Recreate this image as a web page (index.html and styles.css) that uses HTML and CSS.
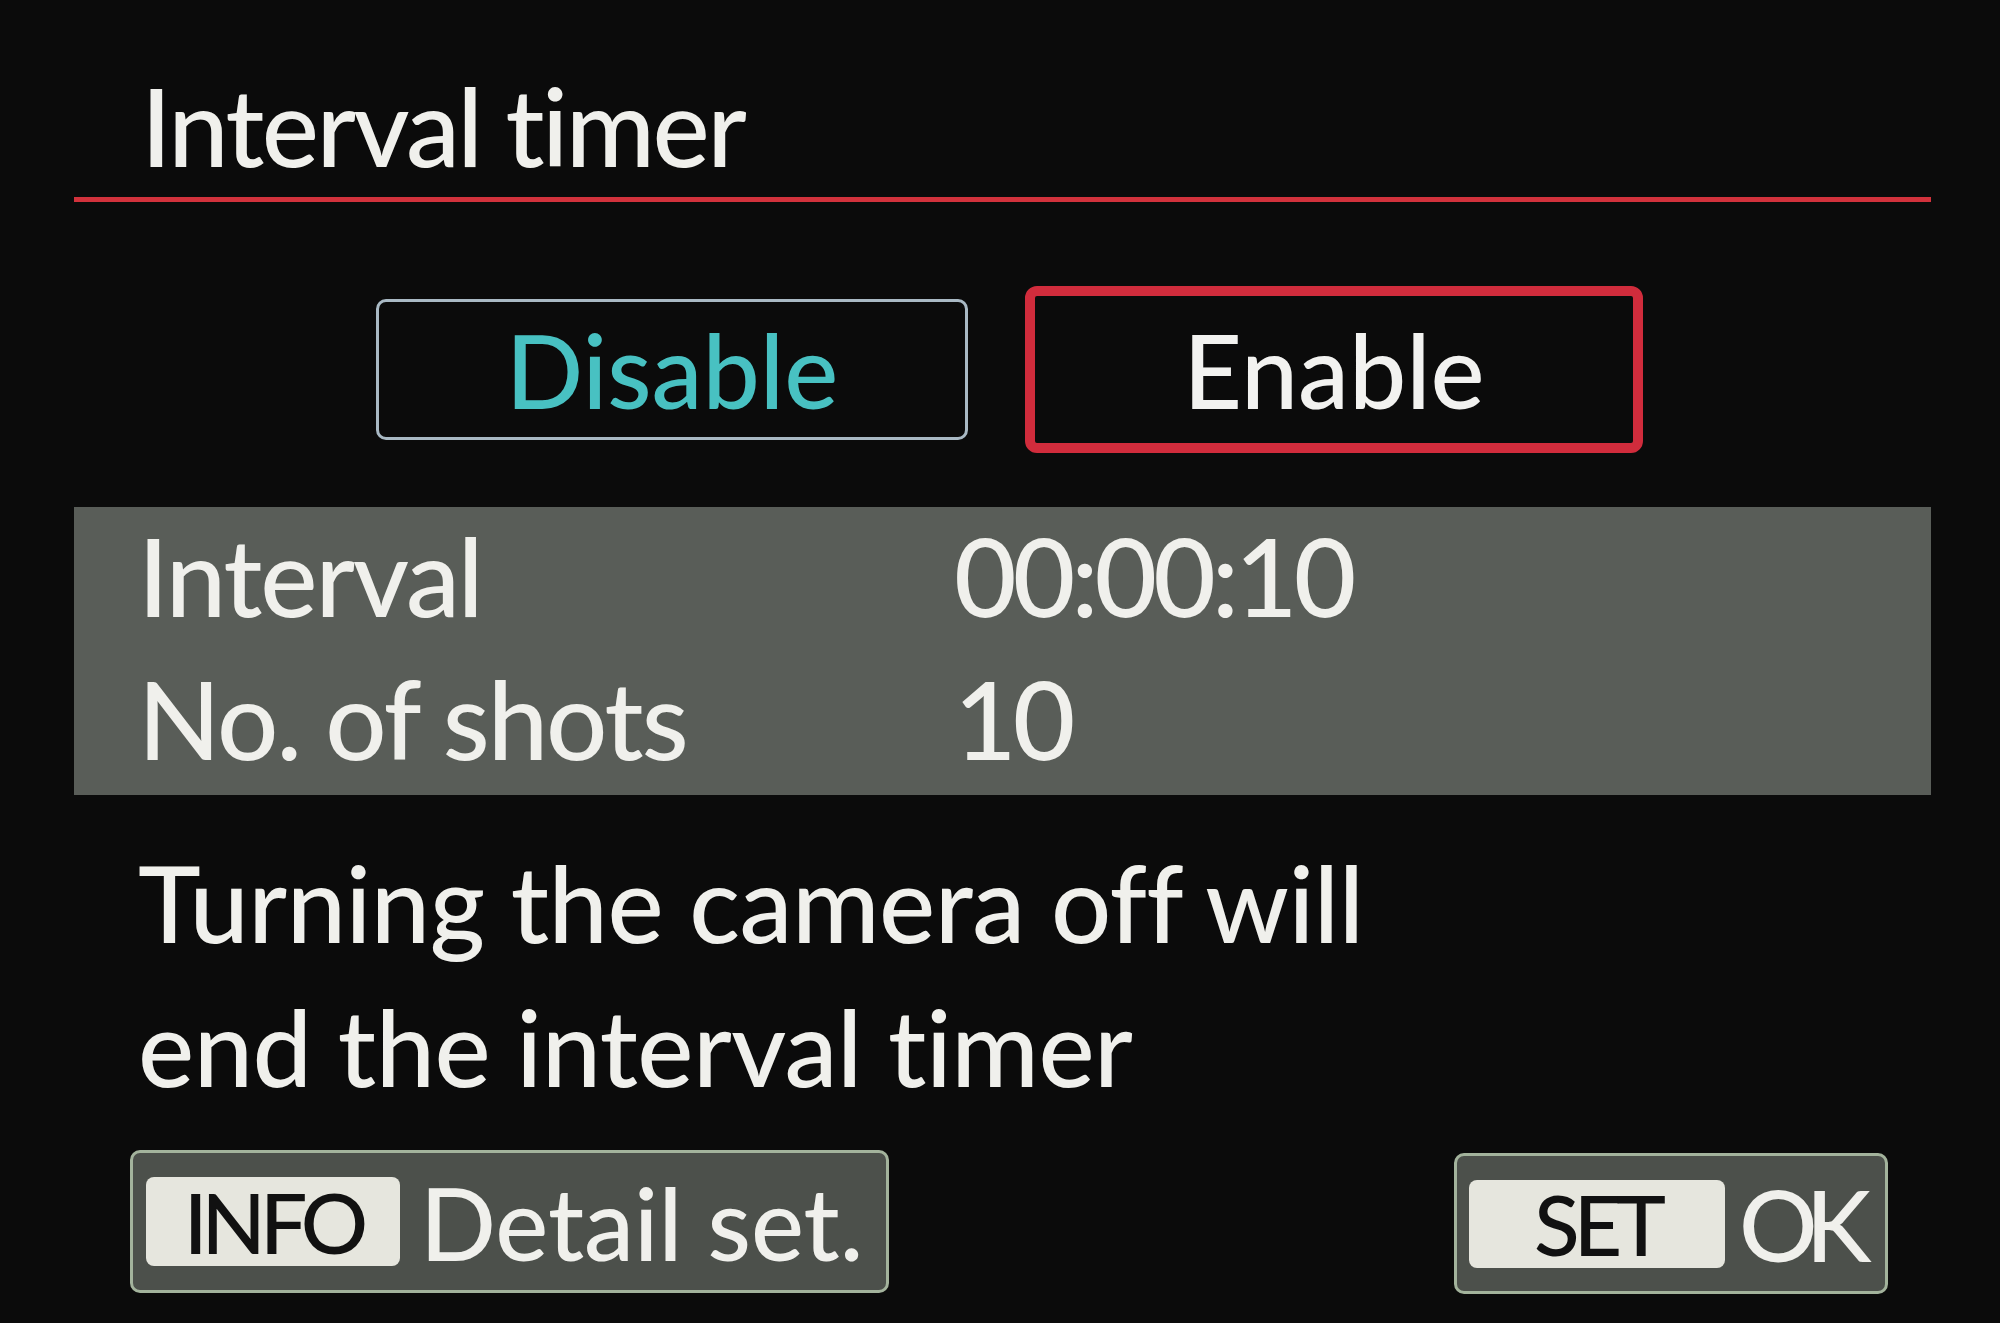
FILE: index.html
```html
<!DOCTYPE html>
<html lang="en">
<head>
<meta charset="utf-8">
<title>Interval timer</title>
<link rel="stylesheet" href="styles.css">
</head>
<body>
<div class="screen">
  <h1 class="title">Interval timer</h1>
  <div class="rule"></div>
  <div class="choices">
    <div class="choice choice--off">Disable</div>
    <div class="choice choice--on">Enable</div>
  </div>
  <div class="settings">
    <div class="label">Interval</div><div class="value">00:00:10</div>
    <div class="label">No. of shots</div><div class="value">10</div>
  </div>
  <p class="note">Turning the camera off will<br>end the interval timer</p>
  <div class="footer">
    <div class="key key--info"><span class="pill">INFO</span><span class="key-label">Detail set.</span></div>
    <div class="key key--set"><span class="pill">SET</span><span class="key-label key-label--ok">OK</span></div>
  </div>
</div>
</body>
</html>
```
FILE: styles.css
```css
html, body {
  margin: 0;
  padding: 0;
}
body {
  width: 2000px;
  height: 1323px;
  overflow: hidden;
  background: #0b0b0b;
  color: #f0f0ec;
  font-family: Lato, "Noto Sans", sans-serif;
  font-weight: 500;
  font-variant-ligatures: none;
  white-space: nowrap;
}
.screen {
  padding: 0 69px 0 74px;
}
.title {
  margin: 0;
  padding: 71px 0 0 67px;
  font-size: 108px;
  line-height: 108px;
  font-weight: 500;
  letter-spacing: -2.5px;
}
.rule {
  margin-top: 18px;
  height: 5px;
  background: #d2323c;
}
.choices {
  margin-top: 84px;
  height: 167px;
  display: flex;
  align-items: center;
  gap: 57px;
  padding-left: 302px;
}
.choice {
  box-sizing: border-box;
  display: flex;
  align-items: center;
  justify-content: center;
  font-size: 102px;
  line-height: 1;
  border-radius: 10px;
}
.choice--off {
  width: 592px;
  height: 141px;
  border: 3px solid #a9b9c4;
  color: #48c1c2;
}
.choice--on {
  width: 618px;
  height: 167px;
  border: 10px solid #d12c3c;
  border-radius: 12px;
  color: #f2f2f0;
}
.settings {
  margin-top: 54px;
  height: 288px;
  box-sizing: border-box;
  background: #595d58;
  padding: 8px 0 17px 64px;
  display: grid;
  grid-template-columns: 816px auto;
  grid-auto-rows: 120px;
  row-gap: 23px;
  font-size: 108px;
  line-height: 120px;
}
.label {
  letter-spacing: -2px;
}
.value {
  letter-spacing: -4px;
}
.note {
  margin: 35px 0 0 64px;
  font-size: 106px;
  line-height: 144px;
  letter-spacing: -0.5px;
}
.footer {
  margin-top: 32px;
  display: flex;
  justify-content: space-between;
  align-items: flex-start;
  padding: 0 43px 0 56px;
}
.key {
  box-sizing: border-box;
  height: 143px;
  border: 3px solid #a3b39c;
  background: #4c504b;
  border-radius: 10px;
  display: flex;
  align-items: center;
}
.key--info {
  width: 759px;
  padding-left: 13px;
}
.key--set {
  width: 434px;
  height: 141px;
  margin-top: 3px;
  padding-left: 12px;
}
.pill {
  box-sizing: border-box;
  height: 89px;
  background: #e6e6de;
  color: #111;
  border-radius: 8px;
  display: flex;
  align-items: center;
  justify-content: center;
  font-size: 84px;
  line-height: 1;
  letter-spacing: -6px;
}
.key--info .pill {
  width: 254px;
}
.key--set .pill {
  width: 256px;
  height: 88px;
}
.key-label {
  font-size: 100px;
  line-height: 1;
  margin-left: 20px;
}
.key-label--ok {
  font-size: 98px;
  letter-spacing: -12px;
  margin-left: 14px;
}
```
